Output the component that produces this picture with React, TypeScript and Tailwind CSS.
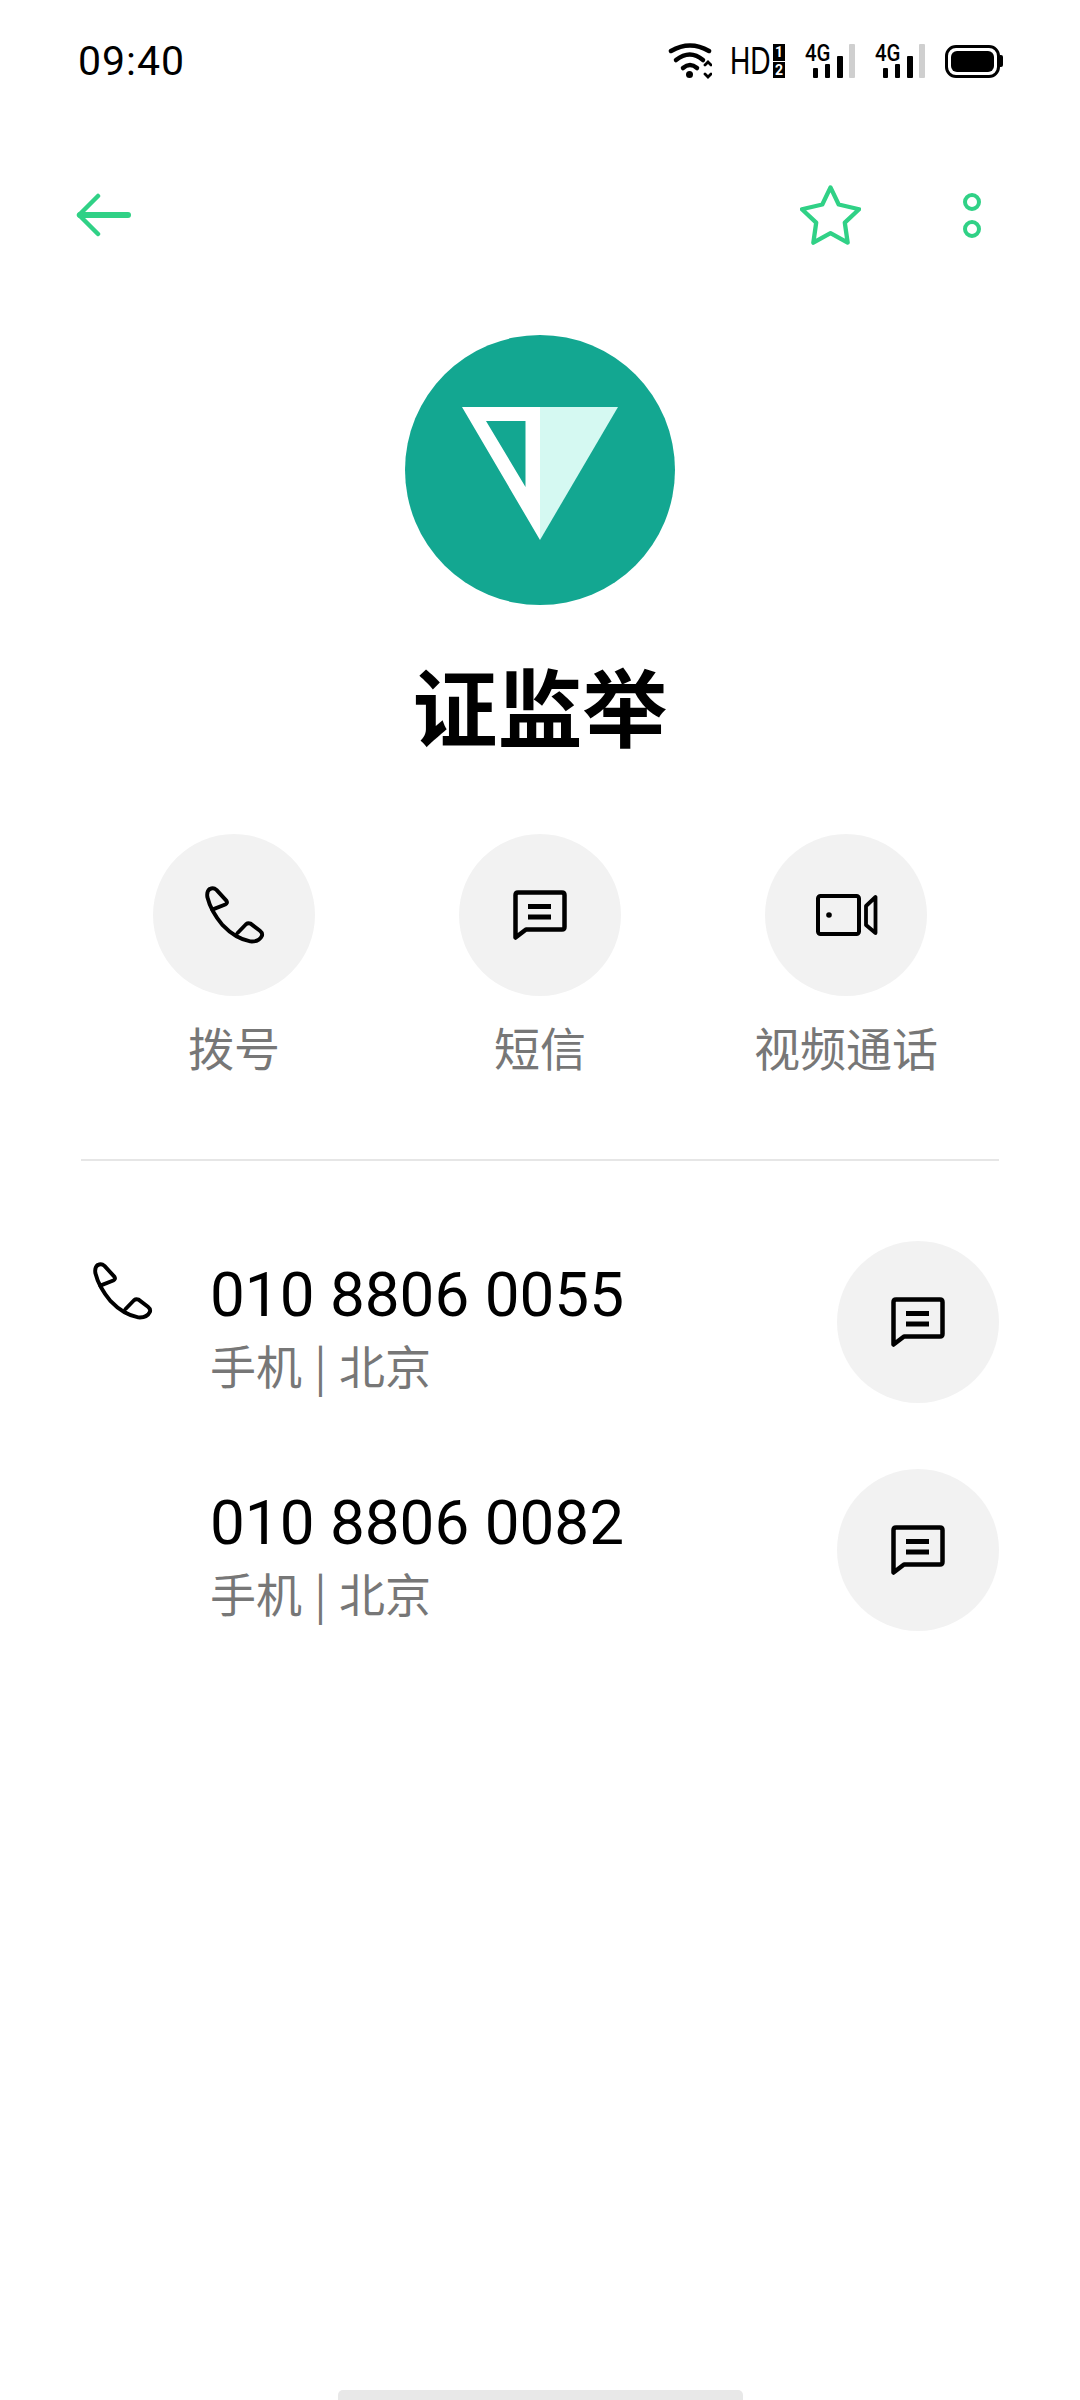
import React from "react";

const CJK = { fontFamily: '"Noto Sans CJK SC", sans-serif' };

function PhoneIcon({ className }: { className?: string }) {
  return (
    <svg viewBox="60 90 190 185" className={className} fill="none" stroke="#000" strokeWidth="12" strokeLinejoin="round" strokeLinecap="round">
      <path d="M80 103 Q91 96 101 105 L132 139 Q136 146 128 150 L88 166" />
      <path d="M80 103 Q70 110 73 128 Q84 172 120 214 Q160 256 205 264 Q232 266 241 247 Q244 238 235 231 L206 209 Q198 206 192 211 L166 238" />
    </svg>
  );
}

function MessageIcon({ className }: { className?: string }) {
  return (
    <svg viewBox="0 -1 54 52" className={className} fill="none" stroke="#000">
      <path d="M2.5 47.5 V5 Q2.5 2.5 5 2.5 H49 Q51.5 2.5 51.5 5 V37 Q51.5 39.5 49 39.5 H13 Z" strokeWidth="4.5" strokeLinejoin="round" />
      <path d="M15 16.5 H38 M15 27 H38" strokeWidth="5" />
    </svg>
  );
}

function VideoIcon({ className }: { className?: string }) {
  return (
    <svg viewBox="0 0 62 42" className={className} fill="none" stroke="#000">
      <rect x="2" y="2" width="41" height="38" rx="2.5" strokeWidth="4" />
      <circle cx="13" cy="21" r="2.8" fill="#000" stroke="none" />
      <path d="M59.5 3 V39 L50 31 V12 Z" strokeWidth="3.8" strokeLinejoin="round" />
    </svg>
  );
}

function SignalGroup() {
  return (
    <div className="relative w-[50px] h-[34px]">
      <span className="absolute left-0 top-[-4px] origin-left scale-x-[0.85] text-[24px] leading-[26px] font-medium text-black" style={{ fontFamily: '"Roboto", sans-serif' }}>4G</span>
      <span className="absolute left-[8px] bottom-0 w-[5px] h-[10px] bg-black rounded-[1px]" />
      <span className="absolute left-[20px] bottom-0 w-[5px] h-[14px] bg-black rounded-[1px]" />
      <span className="absolute left-[32px] bottom-0 w-[6px] h-[22px] bg-black rounded-[1px]" />
      <span className="absolute left-[44px] bottom-0 w-[6px] h-[34px] bg-[#cfcfcf] rounded-[1px]" />
    </div>
  );
}

function StatusIcons() {
  return (
    <div className="flex items-center">
      <svg viewBox="0 0 44 36" className="w-[44px] h-[36px]" fill="none" stroke="#000" strokeWidth="4.5" strokeLinecap="round">
        <path d="M3 8 Q22 -3 41 8" />
        <path d="M8 17 Q22 6 35 17" />
        <path d="M15 25 Q22 19 29 25" />
        <circle cx="21.5" cy="31.5" r="3.5" fill="#000" stroke="none" />
        <path d="M37 22 L40 19 L43 22 M37 31 L40 34 L43 31" strokeWidth="2.8" />
      </svg>
      <div className="ml-[18px] w-[40px] h-[40px]">
        <span className="block origin-left scale-x-[0.72] text-[39px] leading-[40px] text-black" style={{ fontFamily: '"Liberation Sans", sans-serif' }}>HD</span>
      </div>
      <div className="ml-[3px] w-[12px] h-[34px] flex flex-col gap-[1px]">
        <span className="flex-1 bg-black text-white text-[14px] leading-[16px] font-bold text-center" style={{ fontFamily: '"Roboto", sans-serif' }}>1</span>
        <span className="flex-1 bg-black text-white text-[14px] leading-[16px] font-bold text-center" style={{ fontFamily: '"Roboto", sans-serif' }}>2</span>
      </div>
      <div className="ml-[20px]"><SignalGroup /></div>
      <div className="ml-[20px]"><SignalGroup /></div>
      <div className="ml-[20px] flex items-center">
        <div className="w-[55px] h-[33px] rounded-[11px] border-[3.5px] border-black p-[3px]">
          <div className="w-full h-full bg-black rounded-[6px]" />
        </div>
        <div className="w-[3px] h-[12px] bg-black rounded-r-[2px]" />
      </div>
    </div>
  );
}

function Action({ label, children }: { label: string; children: React.ReactNode }) {
  return (
    <div className="flex flex-col items-center">
      <div className="w-[162px] h-[162px] rounded-full bg-[#f2f2f2] flex items-center justify-center">{children}</div>
      <div className="mt-[20px] h-[60px] text-[46px] leading-[60px] text-[#777777]" style={CJK}>{label}</div>
    </div>
  );
}

function NumberRow({ number, phone }: { number: string; phone?: boolean }) {
  return (
    <div className="flex items-center h-[162px]">
      <div className="w-[129px] h-full shrink-0 pl-[10px] pt-[20px]">
        {phone && <PhoneIcon className="w-[62px] h-[60px]" />}
      </div>
      <div className="flex-1 flex flex-col pt-[9px]">
        <div className="text-[62px] leading-[68px] text-black" style={{ fontFamily: '"Roboto", sans-serif' }}>{number}</div>
        <div className="mt-[7px] text-[46px] leading-[56px] text-[#777777] [word-spacing:2px]" style={CJK}>手机 | 北京</div>
      </div>
      <div className="w-[162px] h-[162px] rounded-full bg-[#f2f2f2] flex items-center justify-center">
        <MessageIcon className="w-[54px] h-[52px]" />
      </div>
    </div>
  );
}

export default function App() {
  return (
    <div className="w-[1080px] h-[2400px] bg-white flex flex-col overflow-hidden">
      <div className="h-[122px] flex items-center justify-between pl-[78px] pr-[77px]">
        <span className="text-[41px] tracking-[1px] mt-[2px] text-black" style={{ fontFamily: '"Roboto", sans-serif' }}>09:40</span>
        <StatusIcons />
      </div>

      <div className="h-[186px] flex items-center pl-[76px] pr-[99px]">
        <svg viewBox="0 0 56 44" className="w-[56px] h-[44px]" fill="none" stroke="#30d186" strokeLinecap="round" strokeLinejoin="round">
          <path d="M52 22 H4" strokeWidth="6" />
          <path d="M22 3 L3 22 L22 41" strokeWidth="4.5" />
        </svg>
        <svg viewBox="-1 0 64 62" className="ml-auto w-[61px] h-[60px]" fill="none" stroke="#30d186" strokeWidth="4.5" strokeLinejoin="round">
          <path d="M31 2 L39.6 20 L61 25 L46 39 L49 60 L31 50 L13 60 L16 39 L1 25 L22.4 20 Z" />
        </svg>
        <div className="ml-[102px] flex flex-col gap-[9px]">
          <div className="w-[18px] h-[18px] rounded-full border-[4.5px] border-[#30d186]" />
          <div className="w-[18px] h-[18px] rounded-full border-[4.5px] border-[#30d186]" />
        </div>
      </div>

      <div className="mt-[27px] self-center w-[270px] h-[270px] rounded-full bg-[#13a791] flex items-center justify-center">
        <svg viewBox="0 0 156 133" className="w-[156px] h-[133px] mt-[7px]">
          <path d="M78 0 H156 L78 133 Z" fill="#d5f9f2" />
          <path fillRule="evenodd" d="M0 0 H78 V133 Z M24 14 H63.5 V80 Z" fill="#ffffff" />
        </svg>
      </div>

      <div className="mt-[49px] h-[100px] text-center text-[85px] leading-[100px] font-bold text-black" style={CJK}>证监举</div>

      <div className="mt-[80px] grid grid-cols-3 px-[81px]">
        <Action label="拨号"><PhoneIcon className="w-[62px] h-[60px]" /></Action>
        <Action label="短信"><MessageIcon className="w-[54px] h-[52px]" /></Action>
        <Action label="视频通话"><VideoIcon className="w-[62px] h-[42px] ml-[2px]" /></Action>
      </div>

      <div className="mt-[83px] mx-[81px] h-[2px] bg-[#e6e6e6]" />

      <div className="mt-[80px] mx-[81px] flex flex-col gap-[66px]">
        <NumberRow number="010 8806 0055" phone />
        <NumberRow number="010 8806 0082" />
      </div>

      <div className="mt-auto self-center w-[405px] h-[10px] rounded-t-[5px] bg-[#e8e8e8]" />
    </div>
  );
}
